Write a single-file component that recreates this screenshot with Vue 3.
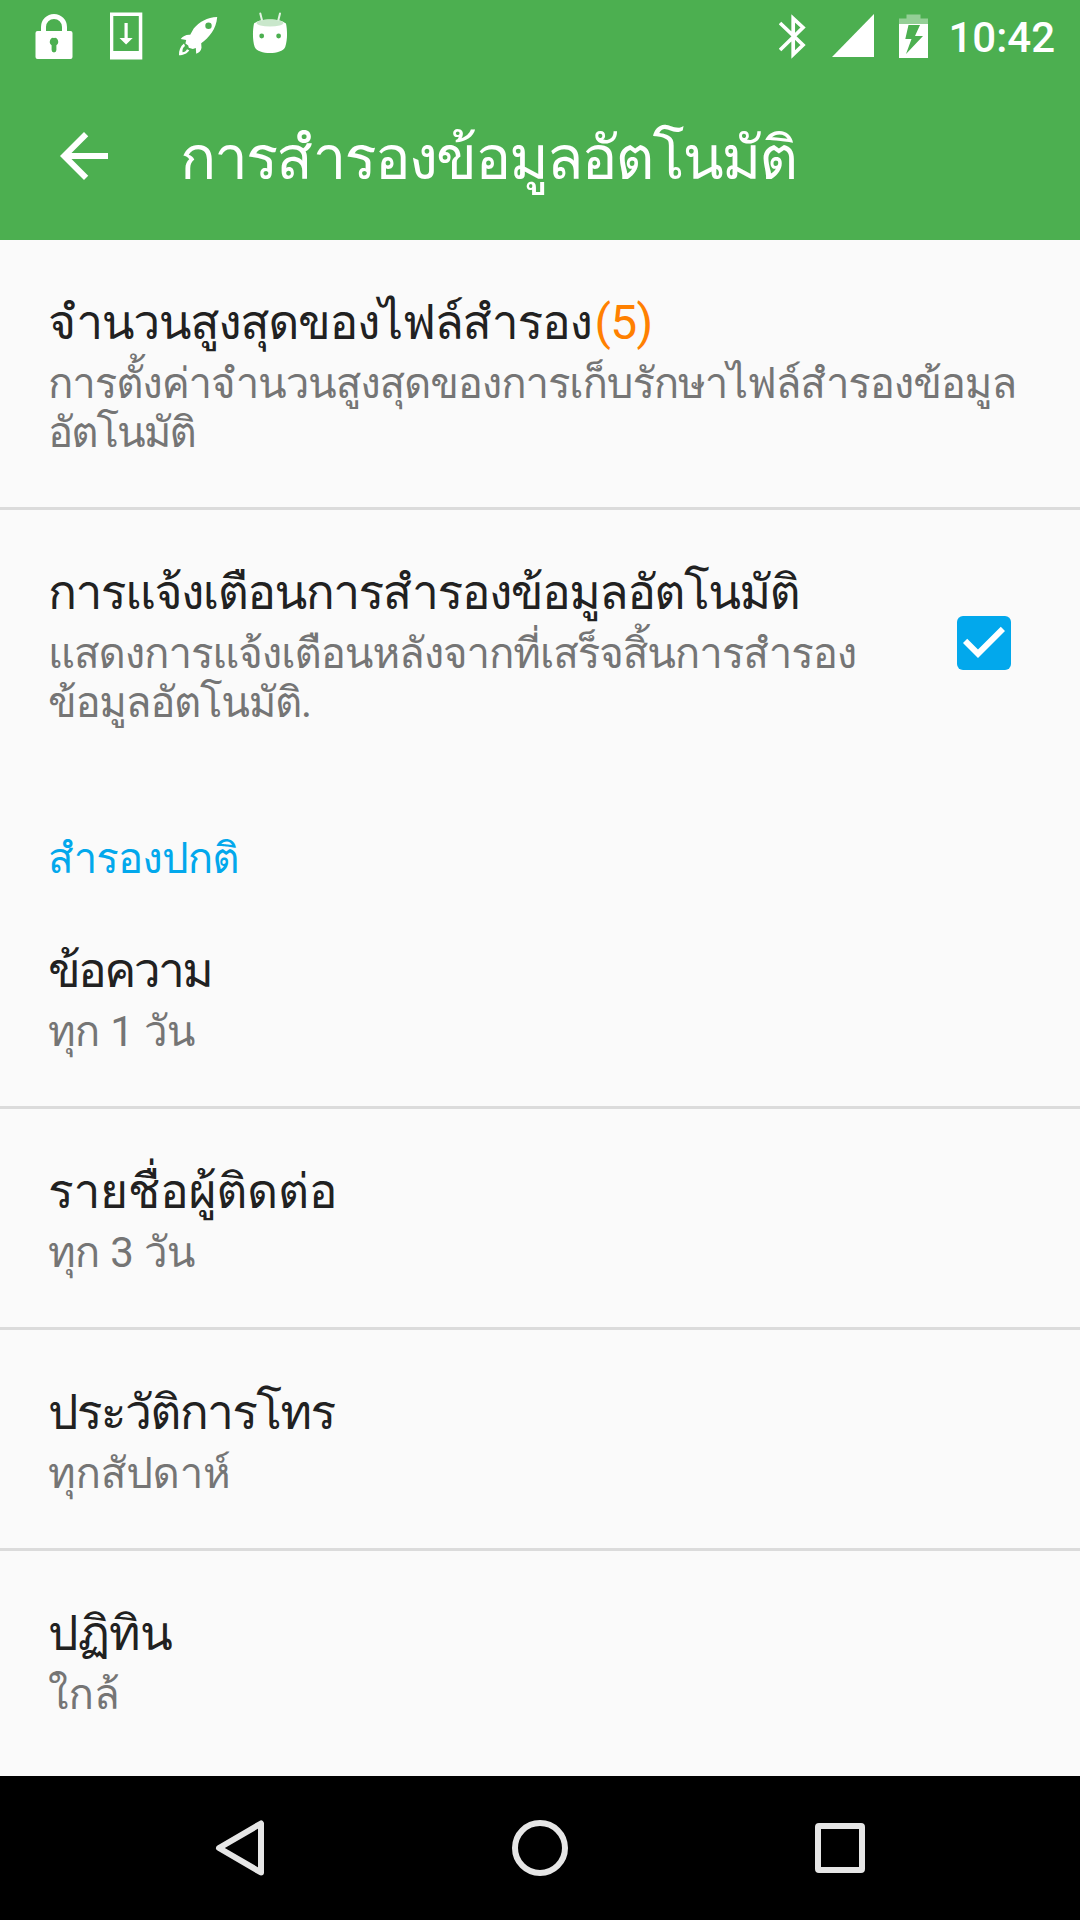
<script setup>
const backups = [
  { title: 'ข้อความ', summary: 'ทุก 1 วัน', titleSpacing: -2.7, summarySpacing: -0.9 },
  { title: 'รายชื่อผู้ติดต่อ', summary: 'ทุก 3 วัน', titleSpacing: -0.35, summarySpacing: -0.9 },
  { title: 'ประวัติการโทร', summary: 'ทุกสัปดาห์', titleSpacing: -1.7, summarySpacing: -0.2 },
  { title: 'ปฏิทิน', summary: 'ใกล้', titleSpacing: -0.8, summarySpacing: 0 },
]
</script>

<template>
  <div class="screen">
    <header class="top">
      <div class="status">
        <div class="left">
          <svg width="38" height="48" viewBox="35 12 38 48">
            <path fill="none" stroke="#fff" stroke-width="5" d="M43.5 33V27a10.5 10.5 0 0 1 21 0v6" />
            <path fill="#fff" fill-rule="evenodd" d="M37.500 31h33a2 2 0 0 1 2 2v24a2 2 0 0 1-2 2h-33a2 2 0 0 1-2-2V33a2 2 0 0 1 2-2zM54 37.500a4.300 4.300 0 0 0-2.400 7.800V50a2.400 2.400 0 0 0 4.800 0v-4.700a4.300 4.300 0 0 0-2.400-7.800z" />
          </svg>
          <svg width="33" height="48" viewBox="110 12 33 48">
            <path fill="#fff" fill-rule="evenodd" d="M110 12.500h32.300v47H110zM113.300 16v35h25.500V16z" />
            <path fill="#fff" d="M124.500 23h3.200v15h5l-6.600 6.500-6.600-6.500h5z" />
          </svg>
          <svg width="40" height="40" viewBox="178 16 40 40">
            <path fill="#fff" fill-rule="evenodd" d="M217.200 16.900c-10 .2-18 5-23.500 11.500l-3.500 6.300c-4-.4-7.500 1.500-9.500 4.300l5.500 1-.8 3.500 2.800 2 .6 2.300 4 1.200 3-1 .4 5.700c3-1 5-3 5.300-6l-.3-4.500c8-6 15-14 16-26.300zM208.500 22.500a3.200 3.200 0 1 1 0 6.400 3.200 3.200 0 0 1 0-6.400z" />
            <path fill="#fff" d="M184 43.500c-3.700 2.800-5.200 7-5 11.700 4.200-.2 8-1.200 10.300-5l-2.300-.9c-1 2-2.500 2.700-4.500 3-.2-2.900.4-4.800 2.500-6.300z" />
          </svg>
          <svg width="36" height="42" viewBox="252 12 36 42">
            <path stroke="#fff" stroke-opacity=".85" stroke-width="2" stroke-linecap="round" d="M260.300 13.500l2 8M280 13.500l-2 8" />
            <path fill="#fff" d="M254 23.500c6-5.500 26-5.500 32 0 1.500 7 1.500 17-.8 23.500-3.500 8-27 8-30.500 0-2.200-6.500-2.200-16.500-.7-23.500z" />
            <ellipse cx="270" cy="23" rx="13.500" ry="3.500" fill="#c9e7cb" />
            <circle cx="261.700" cy="36" r="2.400" fill="#4caf50" /><circle cx="278.600" cy="36" r="2.400" fill="#4caf50" />
          </svg>
        </div>
        <div class="right">
          <svg width="28" height="46" viewBox="779 13 28 46">
            <path fill="none" stroke="#fff" stroke-width="3.700" d="M780 23l23 22-9.800 9.500v-36L803 27.500 780 50" />
          </svg>
          <svg class="signal" width="43" height="46" viewBox="832 13 43 46"><path fill="#fff" d="M874 14v43h-42z" /></svg>
          <svg class="battery" width="30" height="46" viewBox="899 13 30 46">
            <path fill="#94cf96" d="M899 24v-5.500h7.500v-4h14v4h7.500V24z" />
            <path fill="#fff" fill-rule="evenodd" d="M899 24h29v34h-29zM908.500 25l-3.200 14h6.200L906 54l17-18h-8l5-11z" />
          </svg>
          <span class="clock">10:42</span>
        </div>
      </div>
      <div class="bar">
        <svg class="back" width="72" height="72" viewBox="0 0 24 24"><path fill="#fff" d="M20 11H7.830l5.590-5.590L12 4l-8 8 8 8 1.410-1.410L7.830 13H20v-2z" /></svg>
        <h1>การสำรองข้อมูลอัตโนมัติ</h1>
      </div>
    </header>

    <main>
      <section class="row">
        <div class="title l1">จำนวนสูงสุดของไฟล์สำรอง<span class="count">(5)</span></div>
        <div class="summary"><div class="l2">การตั้งค่าจำนวนสูงสุดของการเก็บรักษาไฟล์สำรองข้อมูล</div><div class="l3">อัตโนมัติ</div></div>
      </section>
      <section class="row plain">
        <div>
          <div class="title l4">การแจ้งเตือนการสำรองข้อมูลอัตโนมัติ</div>
          <div class="summary"><div class="l5">แสดงการแจ้งเตือนหลังจากที่เสร็จสิ้นการสำรอง</div><div class="l6">ข้อมูลอัตโนมัติ.</div></div>
        </div>
        <svg class="check" width="72" height="72" viewBox="0 0 24 24"><path fill="#02a8ec" d="M19 3H5a2 2 0 0 0-2 2v14a2 2 0 0 0 2 2h14a2 2 0 0 0 2-2V5a2 2 0 0 0-2-2z" /><path fill="#fff" d="M10 17l-5-5 1.410-1.410L10 14.170l7.590-7.590L19 8z" /></svg>
      </section>
      <h2>สำรองปกติ</h2>
      <section v-for="(b, i) in backups" :key="b.title" class="row" :class="{ last: i === backups.length - 1 }">
        <div class="title" :style="{ letterSpacing: b.titleSpacing + 'px' }">{{ b.title }}</div>
        <div class="summary" :style="{ letterSpacing: b.summarySpacing + 'px' }">{{ b.summary }}</div>
      </section>
    </main>

    <nav>
      <svg width="300" height="144" viewBox="90 1776 300 144"><path fill="none" stroke="#e6e6e6" stroke-width="6" stroke-linejoin="round" d="M261 1823.500v49L219 1848z" /></svg>
      <svg width="300" height="144" viewBox="390 1776 300 144"><circle cx="540" cy="1848" r="25" fill="none" stroke="#e6e6e6" stroke-width="6" /></svg>
      <svg width="300" height="144" viewBox="690 1776 300 144"><rect x="818" y="1826" width="44" height="44" rx="1" fill="none" stroke="#e6e6e6" stroke-width="6" /></svg>
    </nav>
  </div>
</template>

<style>
body { margin: 0; }
</style>

<style scoped>
.screen { width: 1080px; height: 1920px; display: flex; flex-direction: column; overflow: hidden; background: #fafafa; font-family: Roboto, Loma, sans-serif; }
svg { display: block; flex: none; }
.top { height: 240px; background: #4caf50; color: #fff; }
.status { height: 72px; display: flex; justify-content: space-between; box-sizing: border-box; padding: 0 25px 0 35px; }
.left { display: flex; gap: 37px; padding-top: 12px; align-items: flex-start; }
.left svg:nth-child(3) { margin: 4px 0 0 -2px; }
.left svg:nth-child(4) { margin-left: -3px; }
.right { display: flex; padding-top: 13px; align-items: flex-start; }
.signal { margin-left: 25px; }
.battery { margin-left: 24px; }
.clock { font-size: 42px; line-height: 49px; font-weight: 500; margin-left: 19px; white-space: nowrap; }
.bar { height: 168px; display: flex; align-items: center; }
.back { margin-left: 48px; }
h1 { margin: 6px 0 0 60px; font-size: 60px; font-weight: 400; line-height: 70px; white-space: nowrap; letter-spacing: -2px; }
.row { padding: 54px 48px 50px; border-bottom: 3px solid #dbdbdb; white-space: nowrap; }
.plain { border-bottom: 0; display: flex; justify-content: space-between; }
.last { border-bottom: 0; }
.title { font-size: 48px; line-height: 58px; height: 56px; color: #212121; }
.count { color: #ff8000; margin-left: 3px; letter-spacing: -0.7px; }
.summary { margin-top: 9px; font-size: 42px; line-height: 49px; color: #757575; word-spacing: 1.5px; }
.l1 { letter-spacing: -1.35px; }
.l2 { letter-spacing: -1.14px; }
.l3 { letter-spacing: -2px; }
.l4 { letter-spacing: -1.58px; }
.l5 { letter-spacing: -1.1px; }
.l6 { letter-spacing: -1.3px; }
.check { margin: 43px 12px 0 0; }
h2 { margin: 0; padding: 57px 48px 5px; font-size: 42px; line-height: 49px; font-weight: 400; color: #02a8ec; letter-spacing: -0.9px; }
main { height: 1536px; overflow: hidden; }
nav { height: 144px; background: #000; display: flex; justify-content: center; }
</style>
